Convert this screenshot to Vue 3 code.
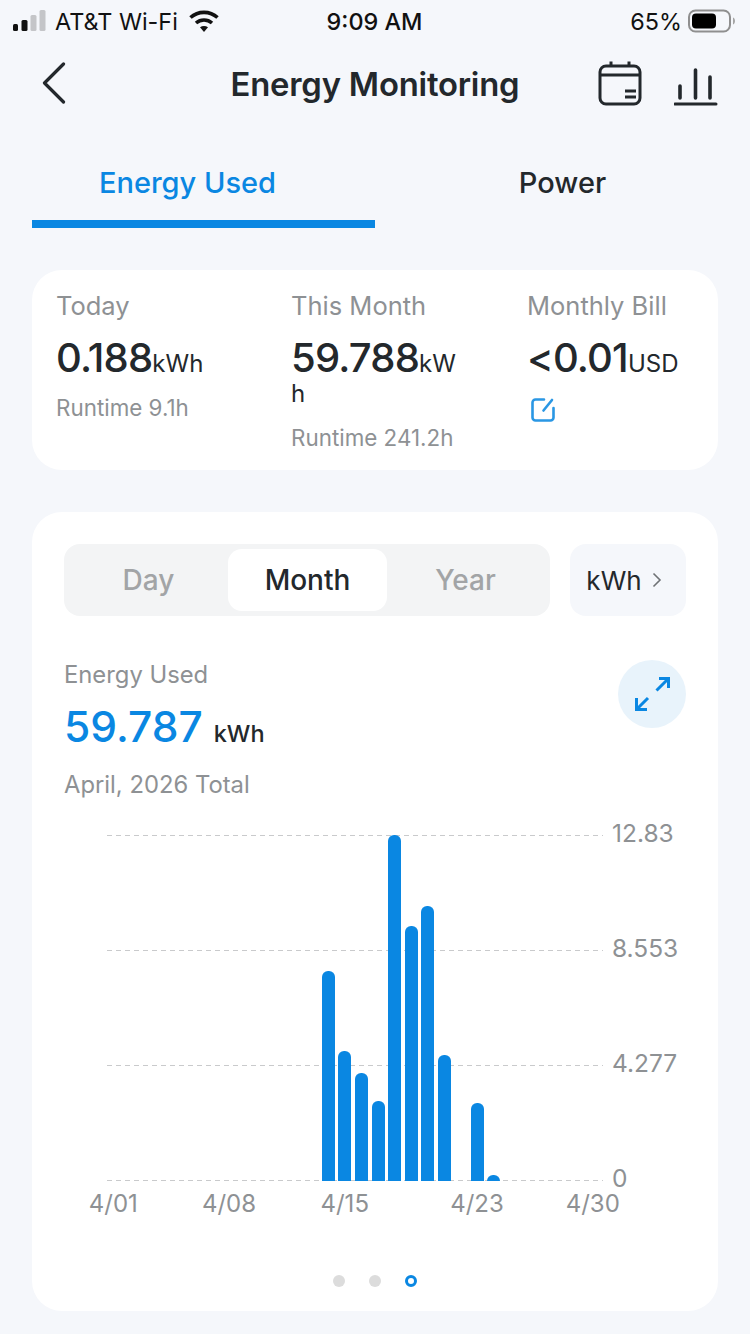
<template>
  <div class="page">
    <div class="status-bar">
      <div class="status-left">
        <svg class="signal" width="34" height="24" viewBox="0 0 34 24">
          <rect x="1" y="15" width="5" height="7" rx="1.5" fill="#111" />
          <rect x="9.5" y="11" width="6" height="11" rx="1.5" fill="#111" />
          <rect x="18.5" y="6" width="6" height="16" rx="1.5" fill="#c4c5c8" />
          <rect x="27.5" y="1" width="6" height="21" rx="1.5" fill="#c4c5c8" />
        </svg>
        <span>AT&amp;T Wi-Fi</span>
        <svg class="wifi" width="30" height="22" viewBox="0 0 30 22">
          <path d="M1.5 7.5C9 .6 21 .6 28.500 7.500" fill="none" stroke="#111" stroke-width="3.600" />
          <path d="M7 13c4.600-4 11.400-4 16 0" fill="none" stroke="#111" stroke-width="3.600" />
          <path d="M11 17.200c2.400-1.700 5.600-1.700 8 0L15 22z" fill="#111" />
        </svg>
      </div>
      <div class="status-time">9:09 AM</div>
      <div class="status-right">
        <span>65%</span>
        <svg width="48" height="24" viewBox="0 0 48 24">
          <rect x="1" y="1.500" width="41" height="21" rx="6.500" fill="none" stroke="#8f8f8f" stroke-width="2" />
          <rect x="4" y="4.500" width="24" height="15" rx="4" fill="#000" />
          <path d="M45 8.500c1.500.6 2 2 2 3.500s-.5 2.900-2 3.500z" fill="#a5a5a5" />
        </svg>
      </div>
    </div>

    <header class="nav">
      <svg class="back" width="24" height="42" viewBox="0 0 24 42">
        <path d="M21.500 2 2.500 21l19 19" fill="none" stroke="#23282c" stroke-width="3.200" stroke-linecap="round" stroke-linejoin="round" />
      </svg>
      <h1>Energy Monitoring</h1>
      <div class="nav-icons">
        <svg width="44" height="46" viewBox="0 0 44 46">
          <rect x="2" y="6" width="40" height="38" rx="6" fill="none" stroke="#23282c" stroke-width="3" />
          <path d="M2 15h40M13 1.500V6M31 1.500V6M27 31h11M27 37h11" fill="none" stroke="#23282c" stroke-width="3" />
        </svg>
        <svg width="44" height="38" viewBox="0 0 44 38">
          <path d="M1 36h41" fill="none" stroke="#23282c" stroke-width="3" stroke-linecap="round" />
          <path d="M6 18v12M21.500 2v28M36 9v21" fill="none" stroke="#23282c" stroke-width="3.600" stroke-linecap="round" />
        </svg>
      </div>
    </header>

    <div class="tabs">
      <div class="tab active">Energy Used</div>
      <div class="tab">Power</div>
    </div>

    <section class="card summary">
      <div v-for="item in summary" :key="item.label" class="summary-col">
        <div class="label">{{ item.label }}</div>
        <div class="value">{{ item.value }}<span class="unit">{{ item.unit }}</span></div>
        <div v-if="item.runtime" class="runtime">{{ item.runtime }}</div>
        <svg v-else class="edit" width="24" height="25" viewBox="0 0 24 25">
          <path d="M13 2.500H4.500a3 3 0 0 0-3 3v15a3 3 0 0 0 3 3h15a3 3 0 0 0 3-3V11" fill="none" stroke="#2a97e4" stroke-width="2.600" stroke-linecap="round" />
          <path d="M21 3 12.500 13.500" fill="none" stroke="#2a97e4" stroke-width="2.600" stroke-linecap="round" />
        </svg>
      </div>
    </section>

    <section class="card chart-card">
      <div class="controls">
        <div class="segment">
          <div class="seg day">Day</div>
          <div class="seg on">Month</div>
          <div class="seg year">Year</div>
        </div>
        <div class="unit-btn">
          kWh
          <svg width="10" height="16" viewBox="0 0 10 16">
            <path d="M1.500 1.500 8 8l-6.500 6.500" fill="none" stroke="#6f7275" stroke-width="1.600" />
          </svg>
        </div>
      </div>

      <div class="total-row">
        <div>
          <div class="total-label">Energy Used</div>
          <div class="total-value">59.787<span>kWh</span></div>
          <div class="total-label period">April, 2026 Total</div>
        </div>
        <div class="expand">
          <svg width="36" height="36" viewBox="0 0 36 36">
            <path d="M22.500 14.500 34 3M25 2.500h9.500V12M14 22 3 33M2.500 22v11.500H13" fill="none" stroke="#0a87e2" stroke-width="3" />
          </svg>
        </div>
      </div>

      <div class="chart">
        <div class="grid-lines">
          <div v-for="tick in ticks" :key="tick" class="grid-line">
            <span>{{ tick }}</span>
          </div>
        </div>
        <div class="bars">
          <div v-for="(h, i) in bars" :key="i" class="slot">
            <div v-if="h" class="bar" :style="{ height: h + 'px' }"></div>
          </div>
        </div>
      </div>
      <div class="x-axis">
        <span v-for="d in dates" :key="d.text" :style="{ gridColumn: d.slot }">{{ d.text }}</span>
      </div>

      <div class="dots">
        <i></i>
        <i></i>
        <i class="current"></i>
      </div>
    </section>
  </div>
</template>

<script setup>
const summary = [
  { label: 'Today', value: '0.188', unit: 'kWh', runtime: 'Runtime 9.1h' },
  { label: 'This Month', value: '59.788', unit: 'kWh', runtime: 'Runtime 241.2h' },
  { label: 'Monthly Bill', value: '<0.01', unit: 'USD' },
]

const ticks = ['12.83', '8.553', '4.277', '0']

// labels sit under their day's slot, and 4/23 is not evenly spaced
const dates = [
  { text: '4/01', slot: 1 },
  { text: '4/08', slot: 8 },
  { text: '4/15', slot: 15 },
  { text: '4/23', slot: 23 },
  { text: '4/30', slot: 30 },
]

// one slot per day, px height of each bar
const bars = [
  0, 0, 0, 0, 0, 0, 0, 0, 0, 0, 0, 0, 0,
  210, 130, 108, 80, 346, 255, 275, 126, 0, 78, 6,
  0, 0, 0, 0, 0, 0,
]
</script>

<style>
body {
  background: #f5f7fb;
}
</style>

<style scoped>
.page {
  width: 750px;
  height: 1334px;
  overflow: hidden;
  background: #f5f7fb;
  font-family: Inter, "Liberation Sans", sans-serif;
  color: #23282c;
}

.status-bar {
  display: grid;
  grid-template-columns: 1fr auto 1fr;
  align-items: center;
  height: 42px;
  padding: 0 14px 0 12px;
  font-size: 23.4px;
  color: #111;
}

.status-left {
  display: flex;
  align-items: center;
  gap: 9px;
}

.wifi {
  margin-left: 2px;
}

.status-time {
  font-weight: 500;
  padding-left: 1px;
}

.status-right {
  display: flex;
  align-items: center;
  justify-content: flex-end;
  gap: 6px;
}

.nav {
  display: flex;
  align-items: center;
  justify-content: center;
  position: relative;
  height: 84px;
}

.nav h1 {
  margin: 0;
  font-size: 32.8px;
  font-weight: 600;
  letter-spacing: -0.2px;
}

.back {
  position: absolute;
  left: 42px;
  top: 20px;
}

.nav-icons {
  position: absolute;
  left: 598px;
  top: 18px;
  display: flex;
  align-items: flex-end;
  gap: 32px;
}

.tabs {
  display: grid;
  grid-template-columns: 343px 343px;
  margin: 0 32px;
  height: 102px;
}

.tab {
  display: flex;
  align-items: center;
  justify-content: center;
  padding: 10px 0 0 32px;
  font-size: 29px;
  font-weight: 500;
  color: #23282c;
}

.tab.active {
  color: #0a87e2;
  border-bottom: 8px solid #0a87e2;
  padding: 18px 32px 0 0;
}

.card {
  background: #fff;
  border-radius: 30px;
  margin: 0 32px;
}

.summary {
  display: grid;
  grid-template-columns: 235px 236px 1fr;
  height: 200px;
  margin-top: 42px;
  padding: 20px 24px 0;
  box-sizing: border-box;
}

.summary-col {
  min-width: 0;
  padding-right: 62px;
}

.summary-col:last-child {
  padding-right: 0;
}

.label {
  font-size: 25.5px;
  line-height: 32px;
  color: #8e9194;
  white-space: nowrap;
}

.value {
  margin-top: 24px;
  font-size: 40px;
  font-weight: 500;
  line-height: 24px;
  word-break: break-all;
  letter-spacing: -0.8px;
}

.unit {
  font-size: 24px;
  font-weight: 400;
  letter-spacing: 0;
}

.runtime {
  margin-top: 17px;
  font-size: 22.4px;
  line-height: 30px;
  color: #8e9194;
  white-space: nowrap;
}

.edit {
  display: block;
  margin: 21px 0 0 4px;
}

.chart-card {
  height: 799px;
  margin-top: 42px;
  padding: 32px 32px 0;
  box-sizing: border-box;
}

.controls {
  display: flex;
  gap: 20px;
}

.segment {
  display: grid;
  grid-template-columns: 164px 159px 163px;
  align-items: center;
  width: 486px;
  height: 72px;
  border-radius: 16px;
  background: #f3f4f5;
  font-size: 28px;
  font-weight: 500;
  color: #a2a4a6;
}

.seg {
  display: flex;
  align-items: center;
  justify-content: center;
  height: 62px;
}

.seg.day {
  padding-left: 5px;
}

.seg.year {
  padding-right: 6px;
}

.seg.on {
  background: #fff;
  border-radius: 14px;
  color: #23282c;
}

.unit-btn {
  display: flex;
  align-items: center;
  justify-content: center;
  gap: 10px;
  width: 116px;
  height: 72px;
  padding-right: 8px;
  box-sizing: border-box;
  border-radius: 16px;
  background: #f5f7fb;
  font-size: 26px;
}

.total-row {
  display: flex;
  justify-content: space-between;
  margin-top: 44px;
}

.total-label {
  font-size: 23.8px;
  line-height: 30px;
  color: #8e9194;
}

.total-value {
  margin-top: 11px;
  font-size: 42.5px;
  font-weight: 500;
  line-height: 52px;
  color: #0a87e2;
}

.total-value span {
  margin-left: 11px;
  font-size: 23.5px;
  color: #23282c;
}

.period {
  margin-top: 10px;
}

.expand {
  display: flex;
  align-items: center;
  justify-content: center;
  width: 68px;
  height: 68px;
  border-radius: 50%;
  background: #e8f3fb;
}

.chart {
  position: relative;
  width: 496px;
  height: 346px;
  margin: 35px 0 0 43px;
}

.grid-lines {
  position: absolute;
  inset: 0;
  display: flex;
  flex-direction: column;
  justify-content: space-between;
}

.grid-line {
  position: relative;
  height: 1px;
  background: repeating-linear-gradient(90deg, #c9cacc 0 5px, transparent 5px 9px);
}

.grid-line span {
  position: absolute;
  left: 505px;
  top: -17px;
  font-size: 24.5px;
  line-height: 30px;
  color: #8e9194;
}

.bars {
  position: absolute;
  inset: 0;
  display: grid;
  grid-template-columns: repeat(30, minmax(0, 1fr));
  align-items: end;
}

.slot {
  display: flex;
  align-items: flex-end;
  height: 100%;
}

.bar {
  width: 13px;
  background: #0a87e2;
  border-radius: 6px 6px 0 0;
}

.x-axis {
  display: grid;
  grid-template-columns: repeat(30, minmax(0, 1fr));
  width: 496px;
  margin: 7px 0 0 41px;
  font-size: 24px;
  line-height: 32px;
  color: #8e9194;
}

.x-axis span {
  grid-row: 1;
  justify-self: center;
  white-space: nowrap;
}

.dots {
  display: flex;
  justify-content: center;
  align-items: center;
  gap: 24px;
  margin: 55px 0 0 0;
}

.dots i {
  width: 12px;
  height: 12px;
  border-radius: 50%;
  background: #dcdcdc;
  box-sizing: border-box;
}

.dots i.current {
  background: #fff;
  border: 3px solid #0a87e2;
}
</style>
